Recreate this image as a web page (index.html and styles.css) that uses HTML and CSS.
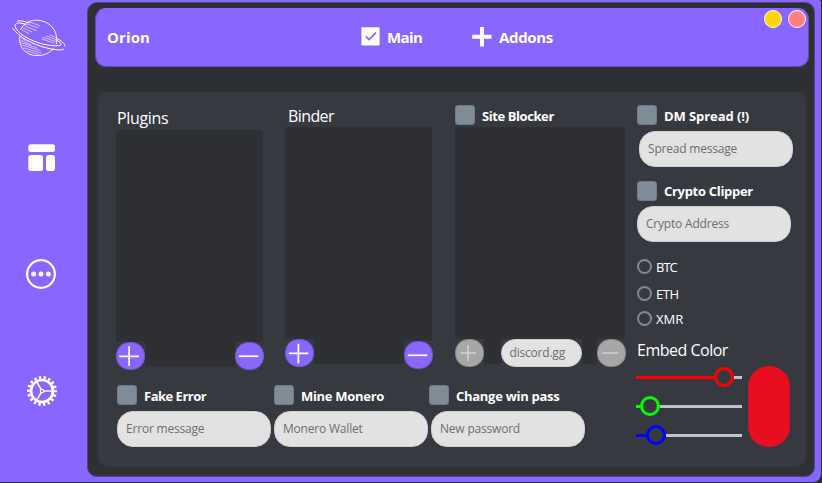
FILE: index.html
```html
<!DOCTYPE html>
<html lang="en">
<head>
<meta charset="utf-8">
<title>Orion</title>
<link rel="stylesheet" href="styles.css">
</head>
<body>
<div class="window">
  <nav class="sidebar">
    <svg class="logo" width="56" height="40" viewBox="0 0 56 40" fill="none" stroke="#fff" stroke-linecap="round">
      <path stroke-width=".9" d="M8.500 10.500C12 3.500 19 1 25 1.200C35 1.500 43 8 44.500 17.500C45 21 44.700 23 44.200 25M41.500 29.500C37 35 31 36.600 25 36.600C14 36.500 7 29 7.200 18"/>
      <path stroke-width="1" d="M5.500 2C9 1.200 13 2.500 17.500 4M.7 9.500C7 18 20 25.500 36 29.300C44 31.200 51 31.500 52 30M4 9.500C1.500 5.500 4 3.600 8 4C10 4.200 12 4.800 14 5.500M4 9.500C8 17 24 24.500 37 26.200C44 27.200 50.500 27 49 24.500C48 23 46 22 44.500 21.200M44.800 19.500C49 21.500 53.500 25 53 27"/>
      <path stroke-width=".6" d="M18 3L28 7M15 5L26 9M13 7L24 11.500M11 9L20 13M10 11L17 14.500M38 16L44 18.500M34 17L44 20.500M31 18.500L44 22.500M30 20L42 24M8 18L14 22M8 21L19 26M8.500 23.500L25 29M10 26L28 31.500M12 29L29 34M15 32L27 35.500"/>
    </svg>
    <svg class="nav-icon nav-layout" width="28" height="28" viewBox="0 0 28 28" fill="#fff">
      <rect x=".3" y=".3" width="26.700" height="7.700" rx="2.500"/><rect x=".3" y="11" width="14.700" height="16" rx="2.500"/><rect x="18" y="11" width="9" height="16" rx="2.500"/>
    </svg>
    <svg class="nav-icon nav-more" width="30" height="30" viewBox="0 0 30 30" fill="#fff">
      <circle cx="15" cy="15" r="13.900" fill="none" stroke="#fff" stroke-width="2.200"/><circle cx="7.600" cy="15" r="2.500"/><circle cx="15" cy="15" r="2.500"/><circle cx="22.400" cy="15" r="2.500"/>
    </svg>
    <svg class="nav-icon nav-settings" width="32" height="32" viewBox="-16 -16 32 32" fill="none" stroke="#fff">
      <circle r="13.500" stroke-width="3" stroke-dasharray="2.300 2.412" stroke-dashoffset="1.150"/>
      <circle r="11" stroke-width="2.700"/>
      <path stroke-width="1.500" d="M1.500 0H10M-.75 1.300L-5 8.660M-.75-1.300L-5-8.660"/><circle r="1.700" stroke-width="1.200"/>
    </svg>
  </nav>
  <main class="content">
    <header class="header">
      <h1 class="brand">Orion</h1>
      <a class="tab tab-main"><svg width="19" height="19" viewBox="0 0 19 19"><rect x=".4" y=".2" width="18.200" height="18.200" rx="1" fill="#fff"/><path d="M4.700 9.300L8 12.600L15 5.600" fill="none" stroke="#8866ff" stroke-width="1.700"/></svg><span>Main</span></a>
      <a class="tab tab-addons"><svg width="20" height="20" viewBox="0 0 20 20"><path d="M10 0V19.500M.2 9.800H19.500" stroke="#fff" stroke-width="3.900"/></svg><span>Addons</span></a>
      <div class="window-buttons"><i class="dot minimize"></i><i class="dot close"></i></div>
    </header>
    <section class="panel">
      <div class="lists-area">
        <div class="lists">
          <div class="column plugins">
            <h2 class="title">Plugins</h2>
            <div class="list"></div>
            <div class="controls">
              <span class="cut"><button class="round"><svg width="29" height="28" viewBox="0 0 29 28"><path d="M2.500 14.300H23.500M13 3.500V24.500"/></svg></button></span>
              <span class="cut"><button class="round"><svg width="29" height="28" viewBox="0 0 29 28"><path d="M3 14.300H24"/></svg></button></span>
            </div>
          </div>
          <div class="column binder">
            <h2 class="title">Binder</h2>
            <div class="list"></div>
            <div class="controls">
              <span class="cut"><button class="round"><svg width="29" height="28" viewBox="0 0 29 28"><path d="M3 14.300H24M13.300 4V25"/></svg></button></span>
              <span class="cut lower"><button class="round"><svg width="29" height="28" viewBox="0 0 29 28"><path d="M3 14.300H24"/></svg></button></span>
            </div>
          </div>
          <div class="column blocker">
            <label class="check"><i class="box"></i><span class="t-site">Site Blocker</span></label>
            <div class="list"></div>
            <div class="controls">
              <span class="cut"><button class="round off"><svg width="29" height="28" viewBox="0 0 29 28"><path d="M4.500 14H21.500M13 5.500V22.500"/></svg></button></span>
              <span class="cut site-cut"><span class="field site"><span>discord.gg</span></span></span>
              <span class="cut"><button class="round off"><svg width="29" height="28" viewBox="0 0 29 28"><path d="M4.500 14H21.500"/></svg></button></span>
            </div>
          </div>
        </div>
        <div class="options">
          <div class="option"><label class="check"><i class="box"></i><span class="t-fake">Fake Error</span></label><div class="field"><span>Error message</span></div></div>
          <div class="option mine"><label class="check"><i class="box"></i><span class="t-mine">Mine Monero</span></label><div class="field"><span>Monero Wallet</span></div></div>
          <div class="option change"><label class="check"><i class="box"></i><span class="t-change">Change win pass</span></label><div class="field"><span>New password</span></div></div>
        </div>
      </div>
      <aside class="side">
        <div class="option spread"><label class="check"><i class="box"></i><span class="t-dm">DM Spread (!)</span></label><div class="field"><span>Spread message</span></div></div>
        <div class="option clipper"><label class="check"><i class="box"></i><span class="t-crypto">Crypto Clipper</span></label><div class="field"><span>Crypto Address</span></div></div>
        <div class="coins">
          <label class="coin"><i class="radio"></i><span class="t-btc">BTC</span></label>
          <label class="coin eth"><i class="radio"></i><span>ETH</span></label>
          <label class="coin"><i class="radio"></i><span class="t-xmr">XMR</span></label>
        </div>
        <h2 class="title embed-title">Embed Color</h2>
        <div class="embed">
          <div class="sliders">
            <div class="slider red"><i class="fill"></i><i class="knob"></i><i class="rest"></i></div>
            <div class="slider green"><i class="fill"></i><i class="knob"></i><i class="rest"></i></div>
            <div class="slider blue"><i class="fill"></i><i class="knob"></i><i class="rest"></i></div>
          </div>
          <div class="swatch"></div>
        </div>
      </aside>
    </section>
  </main>
</div>
</body>
</html>
```
FILE: styles.css
```css
* { box-sizing: border-box; }
body { margin: 0; width: 822px; height: 483px; overflow: hidden; background: #302e33; font-family: "Open Sans", "Noto Sans", sans-serif; color: #fff; }
h1, h2 { margin: 0; }
i { display: block; flex: none; }
svg { display: block; flex: none; }
.window { display: flex; width: 821px; height: 482px; background: #8866ff; border-radius: 0 2px 8px 0; }
.sidebar { width: 87px; flex: none; padding: 19px 0 0 12px; }
.nav-layout { margin: 85px 0 0 16px; }
.nav-more { margin: 87px 0 0 14px; }
.nav-settings { margin: 86px 0 0 14px; }
.content { width: 728px; height: 475px; margin-top: 2px; padding: 6px 0 0 8px; background: #2f3035; border: 1px solid #50438c; border-radius: 10px; }
.header { display: flex; width: 714px; height: 59px; margin-left: -1px; margin-top: -1px; background: #8866ff; border: 1px solid #6350aa; border-top-color: #8866ff; border-radius: 11px; }
.brand { width: 254px; margin: 17px 0 0 11px; font-size: 15px; line-height: 22px; font-weight: 700; letter-spacing: .1px; }
.tab { display: flex; height: 22px; margin-top: 17px; font-size: 15px; line-height: 22px; font-weight: 700; }
.tab svg { margin: 1px 7px 0 0; }
.tab-main { width: 111px; }
.tab-main span { letter-spacing: -.6px; }
.tab-addons { width: 292px; }
.tab-addons span { letter-spacing: -.35px; }
.window-buttons { display: flex; gap: 6px; margin: 1px 0 0; }
.dot { width: 18px; height: 18px; border: 1px solid #fff; border-radius: 50%; }
.minimize { background: #ffd500; }
.close { background: #ff8080; }
.panel { display: flex; width: 708px; height: 375px; margin: 25px 0 0 2px; background: #373940; border-radius: 10px; }
.lists-area { width: 538px; padding-left: 18px; flex: none; }
.lists { display: flex; height: 278px; }
.column { width: 148px; }
.binder { margin-left: 21px; padding-top: 12px; }
.plugins { padding-top: 15px; }
.blocker { width: 171px; margin-left: 22px; padding-top: 13px; }
.title { height: 23px; font-size: 16px; line-height: 23px; font-weight: 400; padding-left: 1px; letter-spacing: -.35px; }
.binder .title { padding-left: 3px; line-height: 24px; letter-spacing: -.6px; }
.list { height: 237px; width: 147px; background: #2f3035; border-radius: 4px; }
.blocker .list { width: 170px; margin-top: 2px; }
.controls { display: flex; justify-content: space-between; align-items: flex-start; margin-top: -25px; }
.cut { display: block; background: #373940; }
.site-cut { margin-left: 1px; }
.lower { margin-top: 2px; }
.round { display: block; padding: 0; width: 29px; height: 28px; border: 1px solid #7058c0; border-radius: 13px; background: #8866ff; }
.round svg { width: 27px; height: 26px; }
.round path { stroke: #fff; stroke-width: 1.900; }
.off { background: #a7a7a7; border-color: #88898b; }
.off path { stroke: #d4d4d4; stroke-width: 1.500; }
.check { display: flex; height: 20px; font-size: 13px; line-height: 22px; font-weight: 700; white-space: nowrap; }
.t-site { letter-spacing: -.42px; }
.t-fake { letter-spacing: -.5px; }
.t-mine { letter-spacing: -.3px; }
.t-change { letter-spacing: -.28px; }
.t-dm { letter-spacing: -.08px; }
.t-crypto { letter-spacing: -.3px; }
.box { width: 20px; height: 20px; margin-right: 7px; background: #7f8b96; border: 1px solid #717c86; border-radius: 3px; }
.field { display: flex; align-items: center; width: 154px; height: 36px; padding: 0 0 1px 8px; background: #e2e2e2; border: 1px solid #cfcfcf; border-radius: 16px; color: #6d6d6d; font-size: 12px; letter-spacing: -.2px; white-space: nowrap; }
.option .field { margin-top: 6px; }
.site { width: 81px; height: 28px; border-radius: 14px; }
.options { display: flex; padding: 15px 0 0 1px; }
.mine { margin-left: 3px; }
.change { width: 157px; margin-left: 1px; }
.change .field { margin-left: 2px; }
.option { flex: none; }
.side { width: 170px; padding: 13px 0 0 1px; }
.spread .field { margin-left: 2px; }
.clipper { margin-top: 14px; }
.clipper .check { line-height: 21px; }
.clipper .field { margin-top: 5px; }
.coins { padding-top: 17px; }
.coin { display: flex; height: 15px; font-size: 13px; line-height: 17px; letter-spacing: -.4px; }
.coin .t-btc { letter-spacing: -1px; }
.coin .t-xmr { letter-spacing: 0; }
.eth { margin: 12px 0 10px; }
.radio { width: 15px; height: 15px; margin-right: 4px; border: 2px solid #7f8b96; border-radius: 50%; }
.embed-title { margin-top: 13px; padding: 0; letter-spacing: -.5px; }
.embed { display: flex; padding-top: 4px; margin-left: -1px; }
.sliders { width: 106px; margin: 1px 6px 0 0; }
.slider { display: flex; height: 20px; margin-bottom: 9px; align-items: center; }
.fill, .rest { height: 3px; }
.rest { flex: 1; background: #bcc4cd; }
.knob { width: 20px; height: 20px; border: 3px solid; border-radius: 50%; }
.red .fill { width: 78px; background: red; } .red .knob { border-color: red; }
.green .fill { width: 4px; background: lime; } .green .knob { border-color: lime; }
.blue .fill { width: 10px; background: blue; } .blue .knob { border-color: blue; }
.swatch { width: 42px; height: 81px; border: 1px solid #c8142a; border-radius: 20px; background: #e81020; }
```
